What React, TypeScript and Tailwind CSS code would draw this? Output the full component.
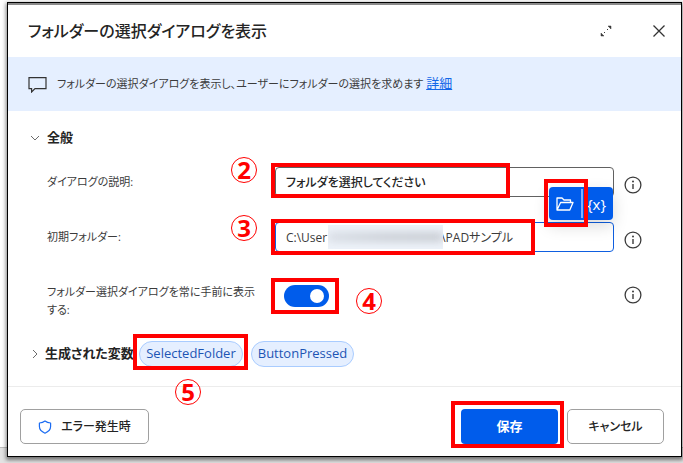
import { useId, useState, type ReactNode } from "react";
import clsx from "clsx";

const REDACTED = "\u2003".repeat(9) + "\u2002";

function InfoIcon() {
  return (
    <svg viewBox="0 0 18 18" className="size-[18px]" fill="none" stroke="#3b3b3b" aria-hidden="true">
      <circle cx="9" cy="9" r="7.9" strokeWidth="1.3" />
      <path d="M9 8v5" strokeWidth="1.4" />
      <circle cx="9" cy="5.6" r="1" fill="#3b3b3b" stroke="none" />
    </svg>
  );
}

function Chevron({ open }: { open?: boolean }) {
  return (
    <svg viewBox="0 0 10 10" className="size-[10px] shrink-0" fill="none" stroke="#6b6b6b" aria-hidden="true">
      <path d={open ? "M1 3l4 4 4-4" : "M3 1l4 4-4 4"} />
    </svg>
  );
}

function Frame({ className }: { className: string }) {
  return <span aria-hidden="true" className={clsx("pointer-events-none absolute z-20 border-4 border-[#ff0000]", className)} />;
}

function Step({ className, children }: { className: string; children: ReactNode }) {
  return (
    <span
      className={clsx(
        "pointer-events-none absolute z-20 flex size-[26px] items-center justify-center rounded-full border border-[#ff0000] font-['Noto_Sans',sans-serif] text-[24px] leading-6 font-bold text-[#ff0000]",
        className,
      )}
    >
      {children}
    </span>
  );
}

interface FieldRowProps {
  id: string;
  label: string;
  children: ReactNode;
}

function FieldRow({ id, label, children }: FieldRowProps) {
  return (
    <div className="grid min-h-[30px] grid-cols-[228px_1fr_18px] items-start">
      <label htmlFor={id} className="pt-[6px] pr-3 text-[11px] leading-[18px]">
        {label}
      </label>
      <div className="relative mr-[10px]">{children}</div>
      <button type="button" aria-label="情報" className="mt-[9px]">
        <InfoIcon />
      </button>
    </div>
  );
}

export default function App() {
  const id = useId();
  const [message, setMessage] = useState("フォルダを選択してください");
  const [folder, setFolder] = useState(`C:\\User${REDACTED}\\PADサンプル`);
  const [onTop, setOnTop] = useState(true);

  return (
    <div className="relative bg-white pt-[2px] pr-[1px] pb-[6px] pl-[7px] font-['Open_Sans','Noto_Sans_CJK_JP',sans-serif] text-[13px] text-[#3b3b3b] [font-feature-settings:'palt']">
      <div className="absolute inset-x-0 bottom-0 h-4 border-t border-[#bdbdbd] bg-[#e3e3e3]" />

      <section
        role="dialog"
        aria-labelledby={`${id}-title`}
        className="relative border border-black bg-white shadow-[0_2px_4px_1px_rgba(0,0,0,0.5)]"
      >
        <div className="h-[2px] bg-[#8a8a8a]" />

        <header className="flex h-[52px] items-center pr-[15px] pl-5">
          <h1 id={`${id}-title`} className="flex-1 text-[16px] font-medium text-[#242424]">
            フォルダーの選択ダイアログを表示
          </h1>
          <button type="button" aria-label="展開" className="mr-[40px]">
            <svg viewBox="0 0 12 12" className="size-3" fill="none" stroke="#3b3b3b">
              <path d="M7 5l1-1M5 7l-1 1" />
              <path d="M11 1v3L8 1zM1 11V8l3 3z" fill="#3b3b3b" strokeWidth="0.5" />
            </svg>
          </button>
          <button type="button" aria-label="閉じる">
            <svg viewBox="0 0 14 14" className="size-[14px]" fill="none" stroke="#333" strokeWidth="1.3">
              <path d="M1.5 1.5l11 11M12.5 1.5l-11 11" />
            </svg>
          </button>
        </header>

        <div className="flex h-[54px] items-center bg-[#e5efff] pl-5">
          <svg viewBox="0 0 19 17" className="mr-[10px] h-[17px] w-[19px]" fill="none" stroke="#333" strokeWidth="1.2">
            <path d="M1 1.6h17v11H7L3.6 16v-3.4H1z" />
          </svg>
          <p className="text-[11px]">
            フォルダーの選択ダイアログを表示し、ユーザーにフォルダーの選択を求めます{" "}
            <a href="#" className="text-[13px] text-[#1267e8] underline">
              詳細
            </a>
          </p>
        </div>

        <div className="pt-[17px] pb-[19px] pl-[22px]">
          <h2 className="flex h-5 items-center gap-[7px] font-bold text-[#242424]">
            <Chevron open />
            全般
          </h2>

          <div className="mt-[19px] flex flex-col gap-[25px] pr-[39px] pl-[17px]">
            <FieldRow id={`${id}-message`} label="ダイアログの説明:">
              <input
                id={`${id}-message`}
                value={message}
                onChange={(e) => setMessage(e.target.value)}
                className="block h-[30px] w-full rounded-[4px] border border-[#616161] px-[10px] text-[12px] font-medium text-[#242424]"
              />
              <Frame className="-top-1 -left-1 h-[35px] w-[239px]" />
              <Step className="-top-[10px] -left-11">2</Step>
            </FieldRow>

            <FieldRow id={`${id}-folder`} label="初期フォルダー:">
              <input
                id={`${id}-folder`}
                value={folder}
                onChange={(e) => setFolder(e.target.value)}
                className="block h-[30px] w-full rounded-[4px] border border-[#0f5fe0] px-[10px] text-[12px]"
              />
              <span className="absolute top-[3px] left-[53px] flex h-6 w-[115px] items-center overflow-hidden bg-[#edf2f9]">
                <span className="h-2 w-full bg-linear-to-r from-[#d5dae2] via-[#c6cad1] to-[#c2c6cc] blur-[4px]" />
              </span>
              <div className="absolute -top-[35px] right-[1px] z-10 flex h-[33px] w-16 rounded-[4px] bg-[#005ceb] text-white shadow-[0_6px_16px_rgba(0,0,0,0.15)]">
                <button type="button" aria-label="フォルダーの選択" className="flex flex-1 items-center justify-center">
                  <svg viewBox="0 0 18 14" className="h-[14px] w-[18px]" fill="none" stroke="currentColor" strokeWidth="1.3" strokeLinejoin="round">
                    <path d="M1 13V1h5l2 2h6.5v2.5M1 13l3.6-7.5H17L13.8 13z" />
                  </svg>
                </button>
                <span className="my-[2px] w-[2px] bg-[#7fb0ff]" />
                <button type="button" className="w-[30px] pr-[3px] text-[15px] leading-[30px] font-medium">
                  {"{x}"}
                </button>
              </div>
              <Frame className="-top-[43px] right-[26px] h-12 w-11" />
              <Frame className="-top-[3px] -left-1 h-9 w-[264px]" />
              <Step className="-top-[7px] -left-11">3</Step>
            </FieldRow>

            <FieldRow id={`${id}-top`} label="フォルダー選択ダイアログを常に手前に表示する:">
              <input
                id={`${id}-top`}
                type="checkbox"
                role="switch"
                checked={onTop}
                onChange={(e) => setOnTop(e.target.checked)}
                className="mt-2 ml-[9px] flex h-[22px] w-[45px] appearance-none items-center rounded-full bg-[#8a8a8a] px-[5px] before:size-[14px] before:rounded-full before:bg-white checked:justify-end checked:bg-[#005ceb]"
              />
              <Frame className="top-[1px] -left-1 h-9 w-[68px]" />
              <Step className="top-[11px] left-[81px]">4</Step>
            </FieldRow>
          </div>

          <div className="relative mt-[22px] flex items-center">
            <Chevron />
            <h2 className="ml-[5px] w-[94px] font-bold whitespace-nowrap text-[#242424]">生成された変数</h2>
            <button type="button" className="h-[26px] w-[104px] rounded-full border border-[#a9ccff] bg-[#e5efff] text-[#1d55b4]">
              SelectedFolder
            </button>
            <button type="button" className="ml-2 h-[26px] w-[103px] rounded-full border border-[#a9ccff] bg-[#e5efff] text-[#1d55b4]">
              ButtonPressed
            </button>
            <Frame className="-top-[7px] left-[103px] h-9 w-[115px]" />
            <Step className="top-[38px] left-[145px]">5</Step>
          </div>
        </div>

        <footer className="flex items-center border-t border-[#ececec] pt-[22px] pr-[17px] pb-3 pl-3 text-[12px] font-medium text-[#242424]">
          <button type="button" className="flex h-[35px] w-[129px] items-center justify-center gap-[9px] rounded-[5px] border border-[#a0a0a0]">
            <svg viewBox="0 0 14 14" className="size-[14px]" fill="none" stroke="#1b6cf2" strokeWidth="1.2" strokeLinejoin="round">
              <path d="M7 1c1.6 1.3 3.4 1.9 5.6 2v3.6c0 3-1.9 5.1-5.6 6.6C3.3 11.7 1.4 9.6 1.4 6.6V3C3.6 2.9 5.4 2.3 7 1z" />
            </svg>
            エラー発生時
          </button>
          <div className="relative mr-[9px] ml-auto">
            <button type="button" className="block h-[35px] w-[97px] rounded-[4px] bg-[#005ceb] text-[13px] font-bold text-white">
              保存
            </button>
            <Frame className="-top-2 -left-[10px] h-[47px] w-[113px]" />
          </div>
          <button type="button" className="h-[35px] w-[97px] rounded-[5px] border border-[#a0a0a0]">
            キャンセル
          </button>
        </footer>
      </section>
    </div>
  );
}
